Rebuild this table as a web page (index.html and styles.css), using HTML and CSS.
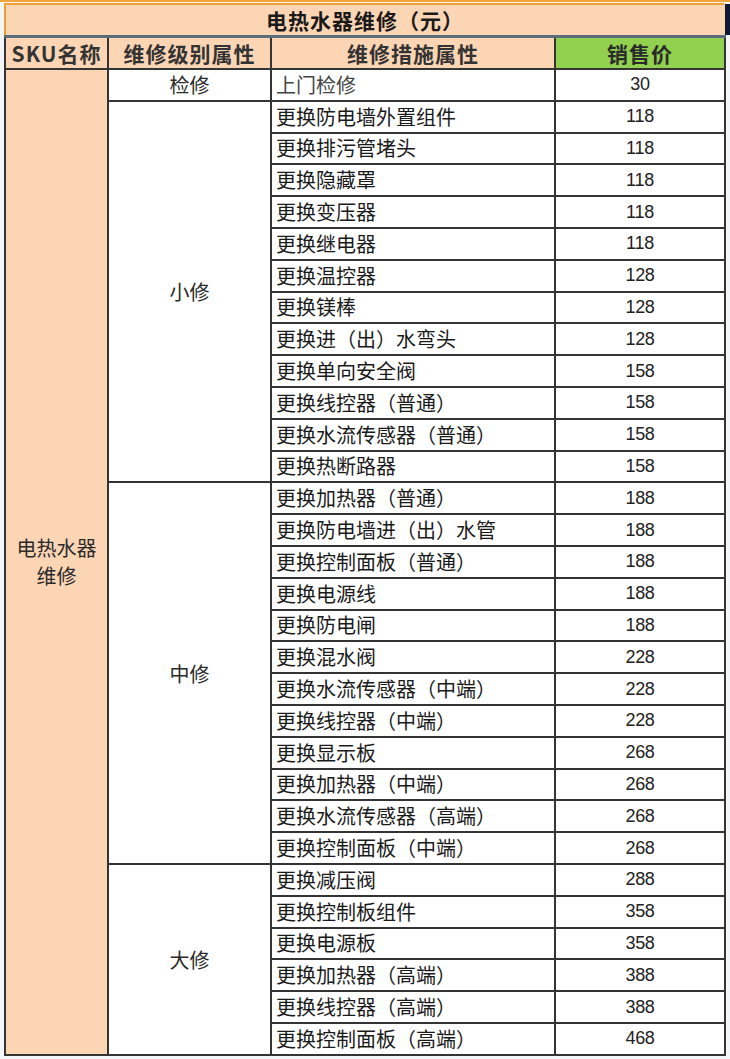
FILE: index.html
```html
<!DOCTYPE html>
<html lang="zh-CN">
<head>
<meta charset="utf-8">
<title>电热水器维修（元）</title>
<link rel="stylesheet" href="styles.css">
</head>
<body>
<div class="topbar"></div>
<table class="sheet">
  <colgroup>
    <col class="c1"><col class="c2"><col class="c3"><col class="c4">
  </colgroup>
  <thead>
    <tr class="title-row"><th colspan="4" class="title">电热水器维修（元）</th></tr>
    <tr class="head-row">
      <th class="hd">SKU名称</th>
      <th class="hd">维修级别属性</th>
      <th class="hd">维修措施属性</th>
      <th class="hd green">销售价</th>
    </tr>
  </thead>
  <tbody class="data">
    <tr><td rowspan="31" class="sku">电热水器<br>维修</td><td class="lvl">检修</td><td class="item gray">上门检修</td><td class="price">30</td></tr>
    <tr><td rowspan="12" class="lvl">小修</td><td class="item">更换防电墙外置组件</td><td class="price">118</td></tr>
    <tr><td class="item">更换排污管堵头</td><td class="price">118</td></tr>
    <tr><td class="item">更换隐藏罩</td><td class="price">118</td></tr>
    <tr><td class="item">更换变压器</td><td class="price">118</td></tr>
    <tr><td class="item">更换继电器</td><td class="price">118</td></tr>
    <tr><td class="item">更换温控器</td><td class="price">128</td></tr>
    <tr><td class="item">更换镁棒</td><td class="price">128</td></tr>
    <tr><td class="item">更换进（出）水弯头</td><td class="price">128</td></tr>
    <tr><td class="item">更换单向安全阀</td><td class="price">158</td></tr>
    <tr><td class="item">更换线控器（普通）</td><td class="price">158</td></tr>
    <tr><td class="item">更换水流传感器（普通）</td><td class="price">158</td></tr>
    <tr><td class="item">更换热断路器</td><td class="price">158</td></tr>
    <tr><td rowspan="12" class="lvl">中修</td><td class="item">更换加热器（普通）</td><td class="price">188</td></tr>
    <tr><td class="item">更换防电墙进（出）水管</td><td class="price">188</td></tr>
    <tr><td class="item">更换控制面板（普通）</td><td class="price">188</td></tr>
    <tr><td class="item">更换电源线</td><td class="price">188</td></tr>
    <tr><td class="item">更换防电闸</td><td class="price">188</td></tr>
    <tr><td class="item">更换混水阀</td><td class="price">228</td></tr>
    <tr><td class="item">更换水流传感器（中端）</td><td class="price">228</td></tr>
    <tr><td class="item">更换线控器（中端）</td><td class="price">228</td></tr>
    <tr><td class="item">更换显示板</td><td class="price">268</td></tr>
    <tr><td class="item">更换加热器（中端）</td><td class="price">268</td></tr>
    <tr><td class="item">更换水流传感器（高端）</td><td class="price">268</td></tr>
    <tr><td class="item">更换控制面板（中端）</td><td class="price">268</td></tr>
    <tr><td rowspan="6" class="lvl">大修</td><td class="item">更换减压阀</td><td class="price">288</td></tr>
    <tr><td class="item">更换控制板组件</td><td class="price">358</td></tr>
    <tr><td class="item">更换电源板</td><td class="price">358</td></tr>
    <tr><td class="item">更换加热器（高端）</td><td class="price">388</td></tr>
    <tr><td class="item">更换线控器（高端）</td><td class="price">388</td></tr>
    <tr><td class="item">更换控制面板（高端）</td><td class="price">468</td></tr>
  </tbody>
</table>
</body>
</html>
```
FILE: styles.css
```css
html, body {
  margin: 0;
  padding: 0;
}
body {
  width: 730px;
  height: 1059px;
  overflow: hidden;
  background: #f3f5f8;
  font-family: "Noto Sans CJK SC", "Noto Sans", sans-serif;
  color: #1e1e1e;
}
.topbar {
  height: 2px;
  background: #f2a53a;
  margin-bottom: 1px;
}
.sheet {
  margin-left: 4px;
  border-collapse: collapse;
  table-layout: fixed;
  width: 720px;
}
.c1 { width: 103px; }
.c2 { width: 163px; }
.c3 { width: 284px; }
.c4 { width: 170px; }

.sheet th, .sheet td {
  border: 2px solid #343434;
  padding: 0;
  white-space: nowrap;
}
.sheet td { overflow: hidden; }
.title-row { height: 32px; }
.sheet .title {
  position: relative;
  background: #fcd5b4;
  border-top: 2px solid #f0a030;
  border-left: 2px solid #f0a030;
  border-right: 2px solid #fcd5b4;
  border-bottom: 3px solid #5a6b7c;
  font-size: 21px;
  font-weight: 700;
  letter-spacing: 1px;
  color: #1a1a1a;
  text-align: center;
  line-height: 28px;
}
.title::after {
  content: "";
  position: absolute;
  top: -1px;
  right: -8px;
  width: 7px;
  height: 31px;
  background: #0d1a33;
}
.head-row { height: 33px; }
.sheet .hd {
  background: #fcd5b4;
  font-size: 21px;
  font-weight: 700;
  letter-spacing: 1px;
  color: #333;
  text-align: center;
  line-height: 28px;
}
.sheet .green {
  background: #92d050;
  color: #2a2a2a;
}
.data tr { height: 31.8px; }
.sheet .sku {
  background: #fcd5b4;
  text-align: center;
  vertical-align: middle;
  font-size: 20px;
  line-height: 28px;
  color: #2a2a2a;
}
.sheet .lvl {
  background: #fff;
  text-align: center;
  vertical-align: middle;
  font-size: 20px;
  color: #2a2a2a;
}
.sheet .item {
  background: #fff;
  font-size: 20px;
  line-height: 26px;
  padding-left: 4px;
  color: #1a1a1a;
}
.sheet .gray { color: #444; }
.sheet .price {
  background: #fff;
  text-align: center;
  font-family: "Liberation Sans", Arial, sans-serif;
  font-size: 18px;
  color: #222;
  letter-spacing: -0.3px;
}
```
